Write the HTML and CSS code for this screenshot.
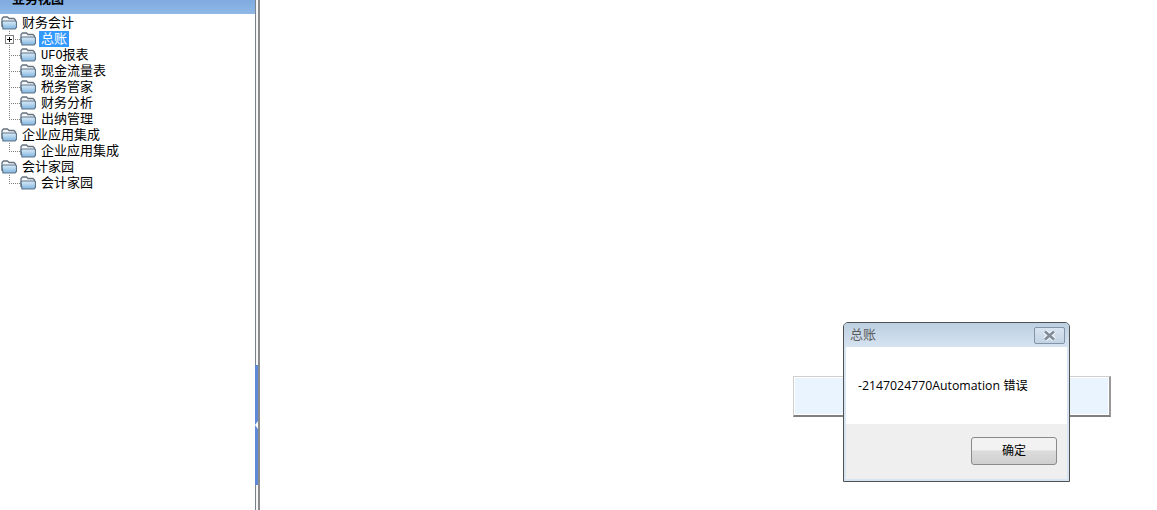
FILE: index.html
```html
<!DOCTYPE html>
<html lang="zh-CN">
<head>
  <meta charset="UTF-8" />
  <title>业务视图</title>
  <link rel="stylesheet" href="styles.css">
</head>
<body>

  <svg class="defs" width="0" height="0">
    <defs>
      <linearGradient id="folderFront" x1="0" y1="0" x2="0" y2="1">
        <stop offset="0" stop-color="#dcedf9"/>
        <stop offset="1" stop-color="#7fb4de"/>
      </linearGradient>
      <symbol id="folder" viewBox="0 0 16 14">
        <path d="M1 11V2.500L2.500 1H6.500L8 2.500H13L14.500 4V6" fill="#f4f7fa" stroke="#66727d" stroke-width="1.300"/>
        <path d="M2 13L1 6.500Q1 5 2.500 5H14Q15.500 5 15.500 6.500V11.500L14 13Z" fill="url(#folderFront)" stroke="#5c7287" stroke-width="1.200"/>
      </symbol>
    </defs>
  </svg>

  <div class="app">
    <!-- Left tree -->
    <aside class="sidebar">
      <div class="sidebar-head"><span>业务视图</span></div>
      <ul class="tree">
        <li>
          <div class="row root"><svg class="folder"><use href="#folder"/></svg><span class="label">财务会计</span></div>
          <ul>
            <li class="row"><span class="elbow"><span class="plus"></span></span><svg class="folder"><use href="#folder"/></svg><span class="label selected">总账</span></li>
            <li class="row"><span class="elbow"></span><svg class="folder"><use href="#folder"/></svg><span class="label"><span class="latin">UFO</span>报表</span></li>
            <li class="row"><span class="elbow"></span><svg class="folder"><use href="#folder"/></svg><span class="label">现金流量表</span></li>
            <li class="row"><span class="elbow"></span><svg class="folder"><use href="#folder"/></svg><span class="label">税务管家</span></li>
            <li class="row"><span class="elbow"></span><svg class="folder"><use href="#folder"/></svg><span class="label">财务分析</span></li>
            <li class="row"><span class="elbow last"></span><svg class="folder"><use href="#folder"/></svg><span class="label">出纳管理</span></li>
          </ul>
        </li>
        <li>
          <div class="row root"><svg class="folder"><use href="#folder"/></svg><span class="label">企业应用集成</span></div>
          <ul>
            <li class="row"><span class="elbow last"></span><svg class="folder"><use href="#folder"/></svg><span class="label">企业应用集成</span></li>
          </ul>
        </li>
        <li>
          <div class="row root"><svg class="folder"><use href="#folder"/></svg><span class="label">会计家园</span></div>
          <ul>
            <li class="row"><span class="elbow last"></span><svg class="folder"><use href="#folder"/></svg><span class="label">会计家园</span></li>
          </ul>
        </li>
      </ul>
    </aside>

    <!-- Splitter -->
    <div class="splitter">
      <div class="handle"><span class="arrow"></span></div>
    </div>

    <main class="content"></main>
  </div>

  <!-- Window behind the dialog -->
  <div class="back-window"></div>

  <!-- Message box -->
  <div class="dialog">
    <div class="dialog-title">
      <span>总账</span>
      <button class="close" type="button">
        <svg width="17" height="13" viewBox="0 0 17 13"><path d="M4 2.500L13 10.500M13 2.500L4 10.500" fill="none" stroke="#f4f7fa" stroke-width="5"/><path d="M4 2.500L13 10.500M13 2.500L4 10.500" fill="none" stroke="#808b98" stroke-width="2.600"/></svg>
      </button>
    </div>
    <div class="dialog-body">-2147024770Automation 错误</div>
    <div class="dialog-foot">
      <button class="ok" type="button">确定</button>
    </div>
  </div>

</body>
</html>
```

FILE: styles.css
```css
* {
  box-sizing: border-box;
  margin: 0;
  padding: 0;
}

html, body {
  height: 100%;
  overflow: hidden;
  background: #fff;
  color: #000;
  font-family: "Noto Sans CJK SC", "Liberation Sans", sans-serif;
}

.defs {
  position: absolute;
}

.app {
  display: flex;
  height: 100%;
}

/* sidebar */
.sidebar {
  width: 255px;
  flex: none;
}

.sidebar-head {
  height: 14px;
  overflow: hidden;
  background: linear-gradient(to bottom, #7fabe0, #8fb8e6);
  font-size: 13px;
  font-weight: bold;
  line-height: 14px;
  padding-left: 12px;
}

.sidebar-head span {
  display: block;
  margin-top: -9px;
}

.tree {
  padding-top: 1px;
}

.tree ul, .tree li {
  list-style: none;
}

.row {
  display: flex;
  align-items: center;
  height: 16px;
  font-size: 13px;
  white-space: nowrap;
}

.root {
  padding-left: 1px;
}

.tree ul .row {
  padding-left: 9px;
}

.folder {
  width: 16px;
  height: 14px;
  flex: none;
}

.label {
  display: block;
  height: 16px;
  line-height: 14px;
  padding: 0 2px;
  margin-left: 3px;
}

.latin {
  font-family: "Liberation Mono", monospace;
  font-size: 12px;
}

.selected {
  background: #3399ff;
  color: #fff;
}

/* dotted tree lines */
.elbow {
  position: relative;
  display: block;
  flex: none;
  width: 11px;
  height: 16px;
  background-image:
    repeating-linear-gradient(to bottom, #808080 0 1px, transparent 1px 2px),
    repeating-linear-gradient(to right, #808080 0 1px, transparent 1px 2px);
  background-repeat: no-repeat;
  background-size: 1px 16px, 11px 1px;
  background-position: 0 0, 0 8px;
}

.elbow.last {
  background-size: 1px 8px, 11px 1px;
}

.plus {
  position: absolute;
  left: -4px;
  top: 4px;
  width: 9px;
  height: 9px;
  border: 1px solid #808080;
  background:
    linear-gradient(#000, #000) center / 5px 1px no-repeat,
    linear-gradient(#000, #000) center / 1px 5px no-repeat,
    #fff;
}

/* splitter */
.splitter {
  position: relative;
  width: 5px;
  flex: none;
  background: linear-gradient(to right, #7a838c 0 1px, #f4f6f8 1px 3px, #8c8c8c 3px 5px);
}

.handle {
  position: absolute;
  left: 0;
  top: 365px;
  width: 3px;
  height: 120px;
  background: #5f88d8;
}

.arrow {
  position: absolute;
  left: 0;
  top: 56px;
  border: 4px solid transparent;
  border-left-width: 0;
  border-right: 3px solid #fff;
}

.content {
  flex: 1;
}

/* window behind */
.back-window {
  position: absolute;
  left: 793px;
  top: 376px;
  width: 318px;
  height: 41px;
  background: #e9f4fe;
  border: 1px solid #cfcfcf;
  border-right: 2px solid #999;
  border-bottom: 2px solid #808080;
  box-shadow: inset 0 0 0 1px #fff;
}

/* message box */
.dialog {
  position: absolute;
  left: 843px;
  top: 322px;
  width: 227px;
  height: 160px;
  display: flex;
  flex-direction: column;
  padding: 0 2px 2px;
  background: #d7e4f1;
  border: 1px solid #505050;
  border-top-left-radius: 5px;
  border-top-right-radius: 5px;
}

.dialog-title {
  display: flex;
  align-items: center;
  justify-content: space-between;
  height: 24px;
  flex: none;
  margin: 0 -2px;
  padding: 0 4px 0 6px;
  background: linear-gradient(to bottom, #bccfe0, #d6e3f1);
  border-top-left-radius: 4px;
  border-top-right-radius: 4px;
  font-size: 13px;
  line-height: 14px;
  color: #5d5d5d;
}

.dialog-title span {
  margin-bottom: 2px;
}

.close {
  width: 31px;
  height: 17px;
  display: flex;
  align-items: center;
  justify-content: center;
  background: linear-gradient(to bottom, #d8e4f0, #c3d3e4);
  border: 1px solid #8494a8;
  border-radius: 2px;
}

.dialog-body {
  height: 77px;
  flex: none;
  padding: 30px 0 0 12px;
  background: #fff;
  font-family: "Open Sans", "Noto Sans CJK SC", sans-serif;
  font-size: 12.3px;
  line-height: 17px;
}

.dialog-foot {
  flex: 1;
  display: flex;
  justify-content: flex-end;
  padding: 13px 10px 0 0;
  background: #efefef;
}

.ok {
  width: 86px;
  height: 28px;
  padding-bottom: 2px;
  background: linear-gradient(to bottom, #f2f2f2 0 45%, #dcdcdc 50%, #cfcfcf 100%);
  border: 1px solid #8a8a8a;
  border-radius: 3px;
  font-family: "Noto Sans CJK SC", sans-serif;
  font-size: 12px;
  line-height: 14px;
  color: #000;
}
```
